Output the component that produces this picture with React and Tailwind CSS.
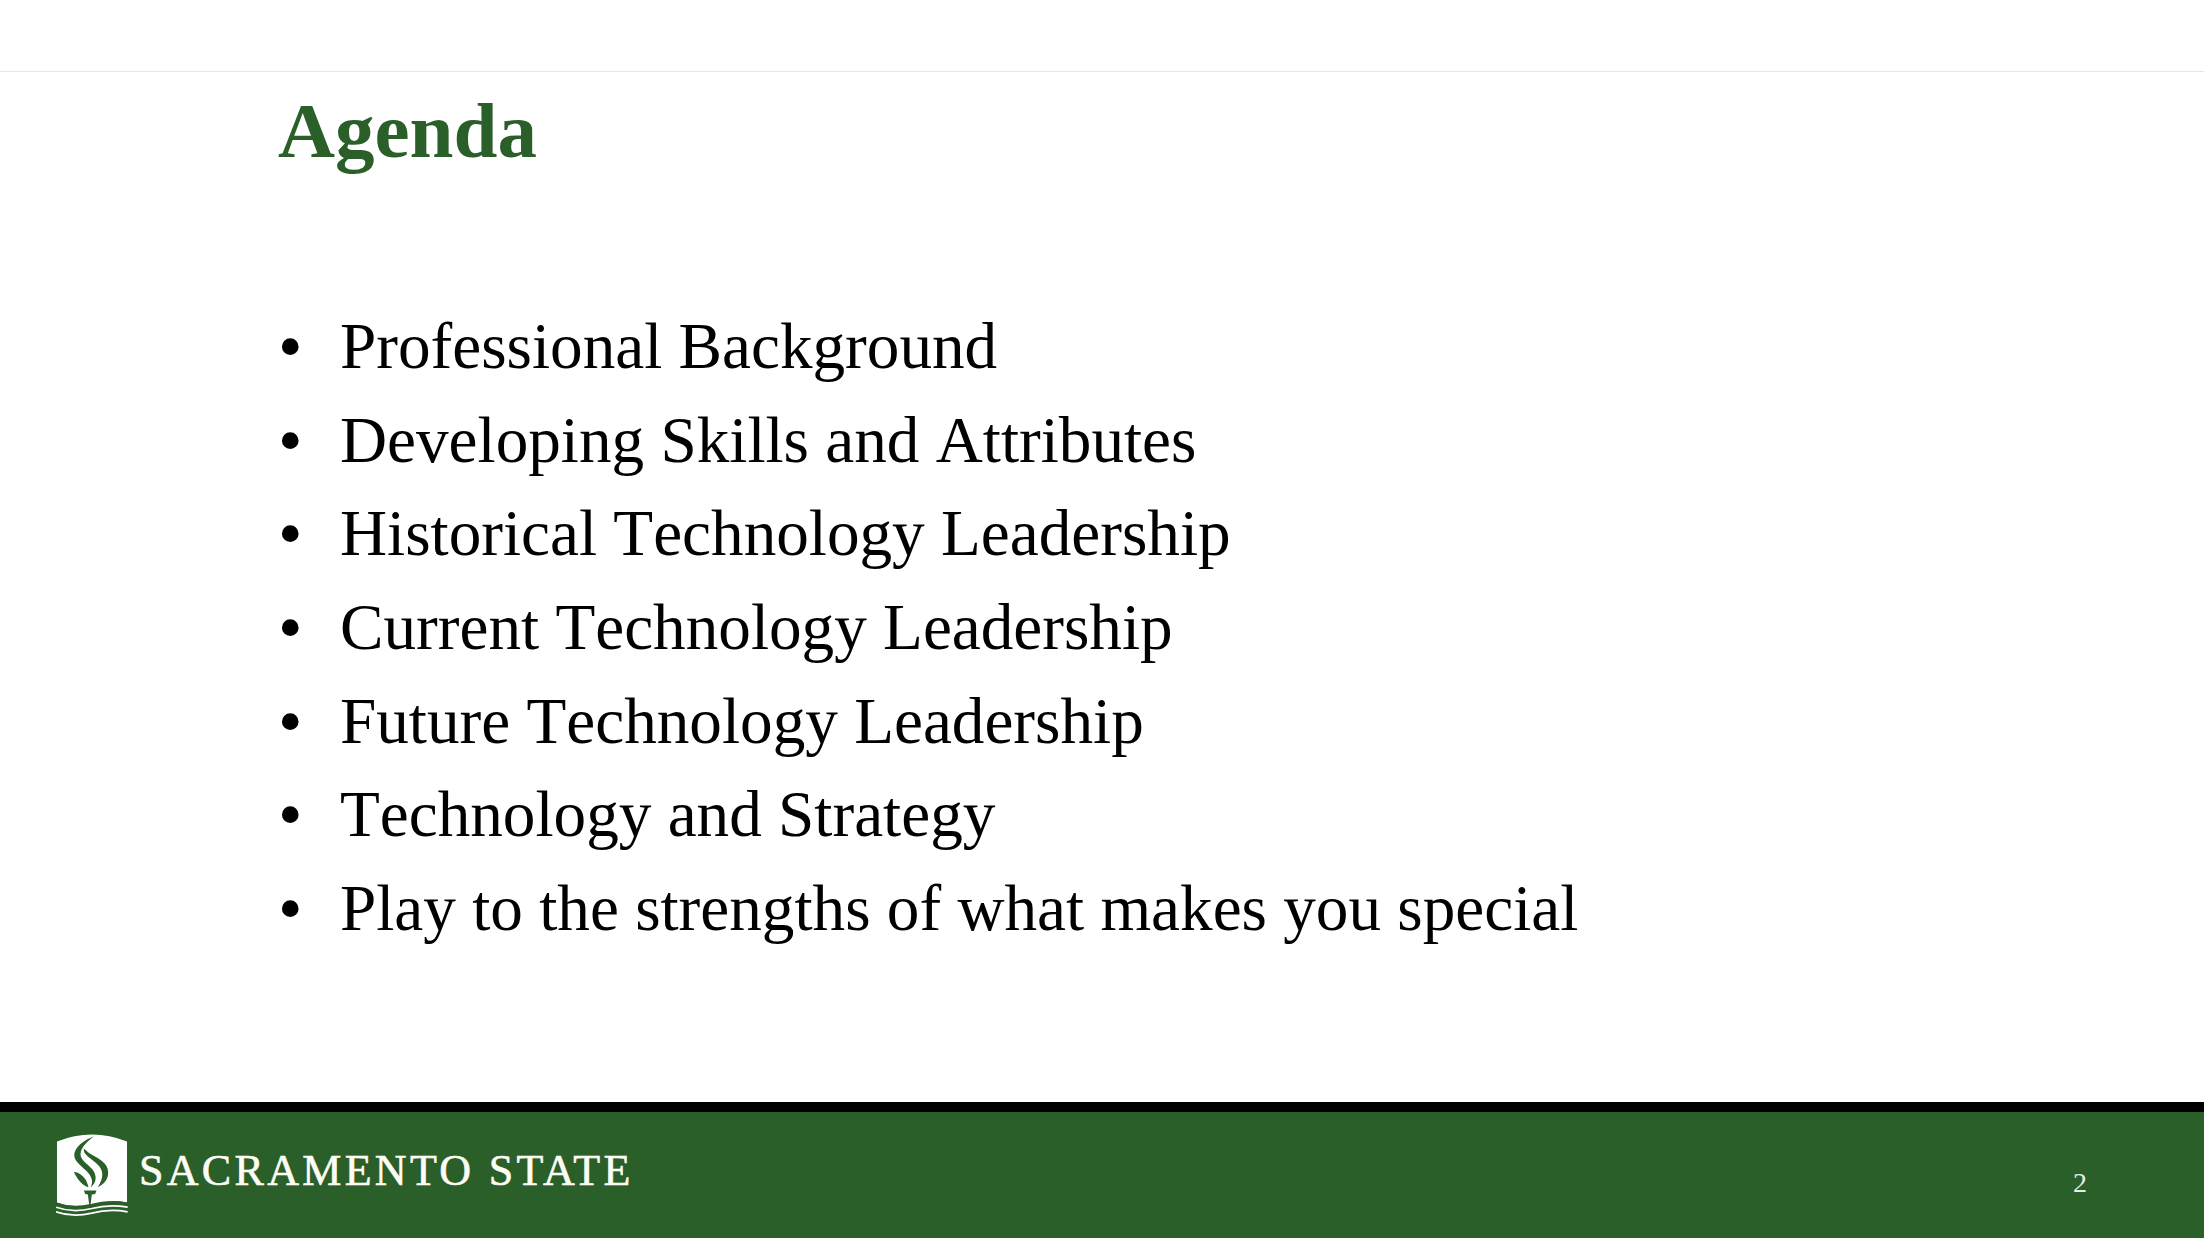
const items = [
  "Professional Background",
  "Developing Skills and Attributes",
  "Historical Technology Leadership",
  "Current Technology Leadership",
  "Future Technology Leadership",
  "Technology and Strategy",
  "Play to the strengths of what makes you special",
];

function Logo() {
  return (
    <svg viewBox="0 0 220 252" className="w-[73px] h-[84px] shrink-0">
      {/* book shape */}
      <path d="M3 22 Q108 -20 214 22 L214 206 Q160 196 108 212 Q50 224 3 206 Z" fill="#fff" />
      {/* flame */}
      <path d="M115 6 C82 18 56 40 55 62 C54 84 84 100 98 118 C110 133 112 148 104 160 C124 146 124 122 108 104 C92 86 72 76 74 58 C76 38 96 20 115 6 Z" fill="#2b5f29" />
      <path d="M84 44 C80 62 108 74 126 92 C142 108 146 128 126 160 C156 146 164 118 152 96 C140 74 110 66 94 52 C90 48 86 46 84 44 Z" fill="#2b5f29" />
      <path d="M54 114 C62 112 78 120 90 138 C94 146 96 152 98 160 C80 156 64 136 54 114 Z" fill="#2b5f29" />
      {/* torch */}
      <path d="M84 170 L122 170 L118 180 L108 182 L104 212 L100 212 L96 182 L88 180 Z" fill="#2b5f29" />
      {/* waves */}
      <path d="M0 208 Q50 226 108 212 Q160 198 216 208" fill="none" stroke="#2b5f29" strokeWidth="5" />
      <path d="M0 220 Q50 238 108 224 Q160 210 216 220" fill="none" stroke="#fff" strokeWidth="5" />
      <path d="M0 234 Q50 252 108 238 Q160 224 216 234" fill="none" stroke="#fff" strokeWidth="5" />
    </svg>
  );
}

export default function App() {
  return (
    <div className="h-screen w-full flex flex-col bg-white overflow-hidden font-['Liberation_Serif',serif]">
      {/* top strip */}
      <div className="h-[72px] shrink-0 border-b border-[#e6e6e6]" />

      <main className="flex-1 pl-[278px]">
        <h1 className="mt-[15px] text-[79px] leading-[88px] font-bold text-[#2b5f29]">Agenda</h1>
        <ul className="mt-[125px] flex flex-col">
          {items.map((item) => (
            <li key={item} className="flex items-center h-[93.7px] text-[65.2px] text-black [font-kerning:none]">
              <span className="w-[62px] shrink-0 text-[70px] leading-none">•</span>
              <span>{item}</span>
            </li>
          ))}
        </ul>
      </main>

      {/* footer */}
      <footer className="h-[136px] shrink-0 border-t-[10px] border-black bg-[#2b5f29] flex items-start pl-[56px] pr-[117px] pt-[22px]">
        <Logo />
        <span className="ml-[10px] mt-[13px] text-[44px] leading-[48px] tracking-[3.3px] text-[#fdfdf5] [-webkit-text-stroke:0.6px_#fdfdf5]">SACRAMENTO STATE</span>
        <span className="ml-auto mt-[34px] text-[28px] leading-[30px] text-[#e8efe6]">2</span>
      </footer>
    </div>
  );
}
